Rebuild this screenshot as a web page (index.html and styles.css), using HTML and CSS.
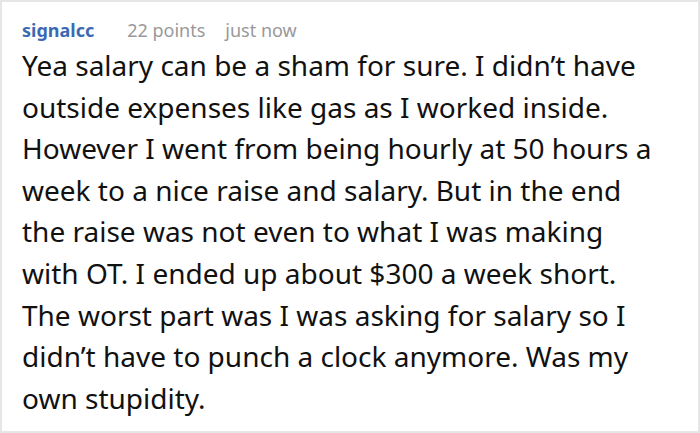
FILE: index.html
```html
<!DOCTYPE html>
<html lang="en">
<head>
<meta charset="utf-8">
<link rel="stylesheet" href="styles.css">
</head>
<body>
<div class="comment">
  <div class="meta">
    <span class="author">signalcc</span>
    <span class="points">22 points</span>
    <span class="time">just now</span>
  </div>
  <p class="text">Yea salary can be a sham for sure. I didn’t have outside expenses like gas as I worked inside. However I went from being hourly at 50 hours a week to a nice raise and salary. But in the end the raise was not even to what I was making with OT. I ended up about $300 a week short. The worst part was I was asking for salary so I didn’t have to punch a clock anymore. Was my own stupidity.</p>
</div>
</body>
</html>
```
FILE: styles.css
```css
html, body {
  margin: 0;
  padding: 0;
  background: #ffffff;
}
.comment {
  box-sizing: border-box;
  width: 700px;
  height: 433px;
  border: 2px solid #e6e6e6;
  padding: 15px 42px 0 20px;
  font-family: "Noto Sans", "Open Sans", sans-serif;
}
.meta {
  display: flex;
  align-items: baseline;
  font-size: 18px;
  line-height: 26px;
}
.author {
  font-weight: 700;
  color: #3b6ab3;
  margin-right: 33px;
}
.points {
  color: #999999;
  margin-right: 20px;
}
.time {
  color: #999999;
}
.text {
  margin: 2px 0 0;
  font-size: 28px;
  line-height: 41.6px;
  color: #111111;
}
```
